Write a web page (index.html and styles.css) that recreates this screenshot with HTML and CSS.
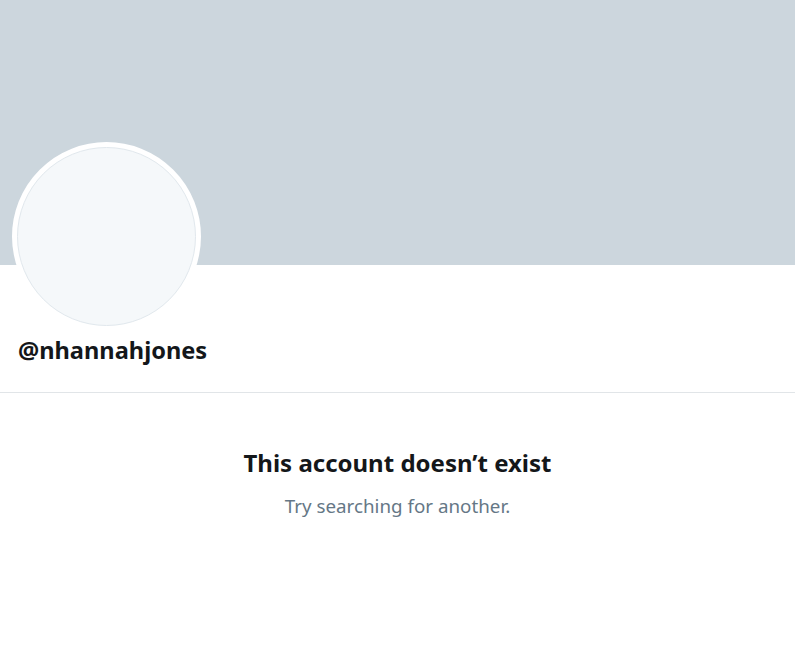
FILE: index.html
```html
<!DOCTYPE html>
<html lang="en">
<head>
  <meta charset="UTF-8">
  <title>@nhannahjones</title>
  <link rel="stylesheet" href="styles.css">
</head>
<body>
  <div class="banner"></div>

  <div class="profile-head">
    <div class="avatar">
      <div class="avatar-inner"></div>
    </div>
    <div class="username">@nhannahjones</div>
  </div>

  <div class="empty-state">
    <h2 class="empty-title">This account doesn’t exist</h2>
    <p class="empty-text">Try searching for another.</p>
  </div>
</body>
</html>
```

FILE: styles.css
```css
body {
  margin: 0;
  background-color: white;
  font-family: "Noto Sans", "Open Sans", sans-serif;
  color: rgb(20, 23, 26);
}

.banner {
  height: 265px;
  background-color: rgb(204, 214, 221);
}

.profile-head {
  display: flex;
  flex-direction: column;
  align-items: flex-start;
  padding: 0 12px 27px 12px;
  border-bottom: 1px solid rgb(225, 229, 232);
}

.avatar {
  width: 179px;
  height: 179px;
  margin-top: -123px;
  border: 5px solid white;
  border-radius: 50%;
  background-color: white;
}

.avatar-inner {
  width: 100%;
  height: 100%;
  box-sizing: border-box;
  border-radius: 50%;
  background-color: rgb(245, 248, 250);
  border: 1px solid rgb(225, 232, 237);
}

.username {
  margin-top: 4px;
  padding-left: 6px;
  font-size: 23.6px;
  font-weight: bold;
  line-height: 30px;
}

.empty-state {
  text-align: center;
  padding-top: 55px;
}

.empty-title {
  margin: 0;
  font-size: 24px;
  font-weight: bold;
  line-height: 30px;
}

.empty-text {
  margin: 16px 0 0 0;
  font-size: 18.8px;
  line-height: 24px;
  color: rgb(101, 119, 134);
}
```
